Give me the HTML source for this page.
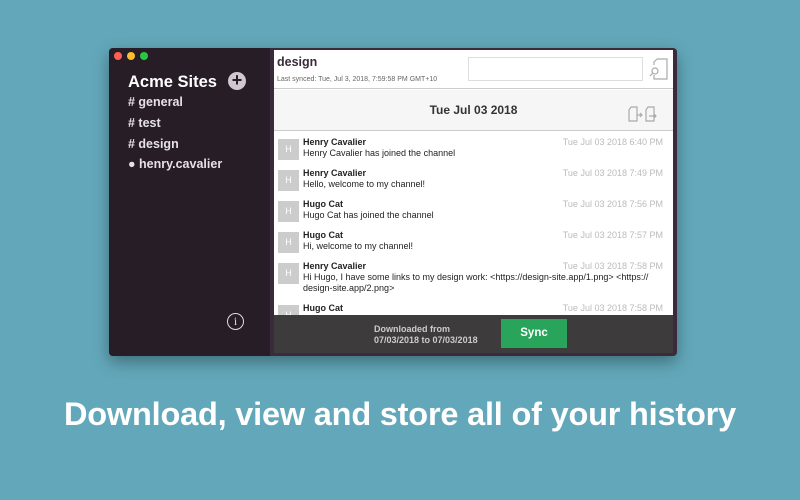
<!DOCTYPE html>
<html><head><style>
*{margin:0;padding:0;box-sizing:border-box}
body{width:800px;height:500px;background:#62a8ba;font-family:"Liberation Sans",sans-serif;position:relative;overflow:hidden}
.win{position:absolute;left:109px;top:48px;width:568px;height:308px;background:#3a2a3b;border-radius:4px;box-shadow:0 6px 16px rgba(0,0,0,.35);overflow:hidden}
.side{position:absolute;left:0;top:0;width:161px;height:308px;background:#261d27}
.dot{position:absolute;top:4px;width:8px;height:8px;border-radius:50%}
.side h1{position:absolute;left:19px;top:25px;color:#fff;font-size:16.5px;font-weight:bold}
.plus{position:absolute;left:119px;top:24px;width:18px;height:18px;border-radius:50%;background:#cfc8cf;color:#261d27;font-size:18px;line-height:17px;text-align:center;font-weight:bold}
.ch{position:absolute;left:19px;color:#e6e1e6;font-size:12.5px;font-weight:bold}
.info{position:absolute;left:118px;top:265px;width:17px;height:17px;border:1.3px solid #ddd;border-radius:50%;color:#ddd;font-size:12px;text-align:center;line-height:15px;font-family:"Liberation Serif",serif}
.main{position:absolute;left:165px;top:2px;width:399px;height:265px;background:#fff}
.hdr{position:absolute;left:0;top:0;width:399px;height:39px;border-bottom:1px solid #ccc}
.hdr b{position:absolute;left:3px;top:5px;font-size:12.5px;color:#3a2a3b}
.hdr small{position:absolute;left:3px;top:26px;font-size:7px;color:#666}
.search{position:absolute;left:194px;top:7px;width:175px;height:24px;border:1px solid #ddd}
.datebar{position:absolute;left:0;top:40px;width:399px;height:41px;background:#f6f6f6;border-bottom:1px solid #ccc;text-align:center;font-weight:bold;font-size:12px;line-height:40px;color:#333}
.msg{position:absolute;left:4px;width:391px;font-size:9px;color:#222}
.av{position:absolute;left:0;top:2px;width:21px;height:21px;background:#ccc;color:#fff;text-align:center;line-height:21px;font-size:9px}
.msg .n{position:absolute;left:25px;top:0;font-weight:bold}
.msg .t{position:absolute;left:25px;top:11px;width:360px;line-height:11px}
.msg .d{position:absolute;right:6px;top:0;color:#bbb}
.bot{position:absolute;left:165px;top:267px;width:399px;height:38px;background:#3d3b3c}
.bot .txt{position:absolute;left:100px;top:9px;color:#ccc;font-size:9px;font-weight:bold;line-height:11px}
.sync{position:absolute;left:227px;top:4px;width:66px;height:29px;background:#28a55a;color:#fff;font-weight:bold;font-size:11.5px;text-align:center;line-height:29px}
.head{position:absolute;left:0;width:800px;top:396px;text-align:center;color:#fff;font-size:32.5px;font-weight:bold;letter-spacing:-0.2px}
</style></head><body>
<div class="win">
 <div class="side">
  <div class="dot" style="left:5px;background:#fc5f57"></div>
  <div class="dot" style="left:18px;background:#fdbc2e"></div>
  <div class="dot" style="left:31px;background:#28c840"></div>
  <h1>Acme Sites</h1><div class="plus">+</div>
  <div class="ch" style="top:47px"># general</div>
  <div class="ch" style="top:68px"># test</div>
  <div class="ch" style="top:89px"># design</div>
  <div class="ch" style="top:109px">● henry.cavalier</div>
  <div class="info">i</div>
 </div>
 <div class="main">
  <div class="hdr"><b>design</b><small>Last synced: Tue, Jul 3, 2018, 7:59:58 PM GMT+10</small><div class="search"></div>
   <svg style="position:absolute;left:375px;top:7px" width="20" height="24" viewBox="0 0 20 24" fill="none" stroke="#aaa" stroke-width="1.2"><path d="M8 2h10v20H5v-4M8 2L5 5v3"/><circle cx="6" cy="14" r="3"/><path d="M4 16l-3 3"/></svg></div>
  <div class="datebar">Tue Jul 03 2018
   <svg style="position:absolute;left:354px;top:15px" width="34" height="18" viewBox="0 0 34 18" fill="none" stroke="#aaa" stroke-width="1.2"><path d="M3 2h6v14H1V5zM9 10h5M12 8l2 2-2 2M20 2h6v14h-8V5zM21 11h7M26 9l2 2-2 2"/></svg></div>
  <div class="msg" style="top:87px"><div class="av">H</div><span class="n">Henry Cavalier</span><div class="t">Henry Cavalier has joined the channel</div><span class="d">Tue Jul 03 2018 6:40 PM</span></div>
  <div class="msg" style="top:118px"><div class="av">H</div><span class="n">Henry Cavalier</span><div class="t">Hello, welcome to my channel!</div><span class="d">Tue Jul 03 2018 7:49 PM</span></div>
  <div class="msg" style="top:149px"><div class="av">H</div><span class="n">Hugo Cat</span><div class="t">Hugo Cat has joined the channel</div><span class="d">Tue Jul 03 2018 7:56 PM</span></div>
  <div class="msg" style="top:180px"><div class="av">H</div><span class="n">Hugo Cat</span><div class="t">Hi, welcome to my channel!</div><span class="d">Tue Jul 03 2018 7:57 PM</span></div>
  <div class="msg" style="top:211px"><div class="av">H</div><span class="n">Henry Cavalier</span><div class="t">Hi Hugo, I have some links to my design work: &lt;https://design-site.app/1.png&gt; &lt;https://<br>design-site.app/2.png&gt;</div><span class="d">Tue Jul 03 2018 7:58 PM</span></div>
  <div class="msg" style="top:253px"><div class="av">H</div><span class="n">Hugo Cat</span><span class="d">Tue Jul 03 2018 7:58 PM</span></div>
 </div>
 <div class="bot"><div class="txt">Downloaded from<br>07/03/2018 to 07/03/2018</div><div class="sync">Sync</div></div>
</div>
<div class="head">Download, view and store all of your history</div>
</body></html>
